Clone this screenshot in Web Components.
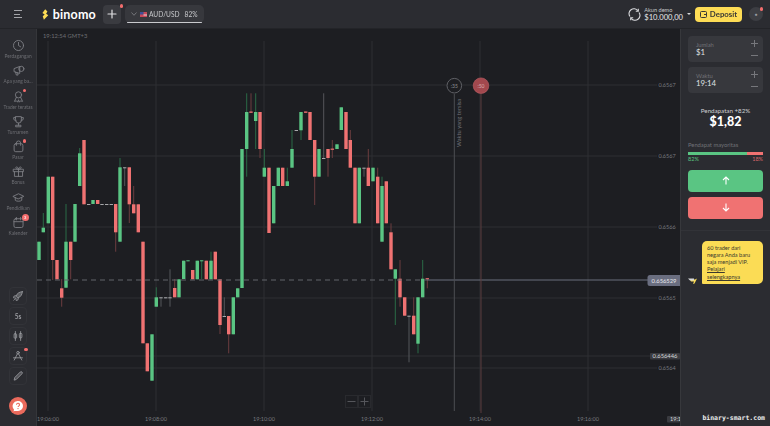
<!DOCTYPE html>
<html lang="id">
<head>
<meta charset="utf-8">
<title>Binomo</title>
<style>
  html, body { margin: 0; height: 100%; background: #1d1e22; }
  body { font-family: Lato, "Noto Sans", sans-serif; overflow: hidden; }
</style>
</head>
<body>
<bn-app>
  <bn-topbar slot="top"></bn-topbar>
  <bn-sidebar slot="side">
    <bn-side-item label="Perdagangan" icon="clock"></bn-side-item>
    <bn-side-item label="Apa yang ba..." icon="news"></bn-side-item>
    <bn-side-item label="Trader teratas" icon="medal" dot></bn-side-item>
    <bn-side-item label="Turnamen" icon="trophy"></bn-side-item>
    <bn-side-item label="Pasar" icon="bag" dot></bn-side-item>
    <bn-side-item label="Bonus" icon="gift"></bn-side-item>
    <bn-side-item label="Pendidikan" icon="cap"></bn-side-item>
    <bn-side-item label="Kalender" icon="calendar" badge="3"></bn-side-item>
  </bn-sidebar>
  <bn-chart slot="chart"></bn-chart>
  <bn-panel slot="panel">
    <bn-stepper label="Jumlah" value="$1"></bn-stepper>
    <bn-stepper label="Waktu" value="19:14"></bn-stepper>
  </bn-panel>
</bn-app>

<script>
/**
 * Icons used by the sidebar and tool buttons
 */
const ICONS = {
  clock: '<circle cx="8" cy="8" r="6.2"/><path d="M8 4.2V8l2.6 1.6"/>',
  news: '<path d="M3 5.5 9.5 3v8.6L3 9.6z"/><circle cx="11.5" cy="6" r="3.2"/><path d="M4.5 10l.8 3.6h2.2L7 11"/>',
  medal: '<circle cx="8" cy="6" r="3.8"/><path d="M5.4 9 3 14l2.6-.6L7 15l1-3 1 3 1.4-1.6 2.6.6-2.4-5"/>',
  trophy: '<path d="M4.5 2h7v4.5a3.5 3.5 0 0 1-7 0z"/><path d="M4.5 3.2H2c0 2.6 1 3.8 2.8 4M11.5 3.2H14c0 2.6-1 3.8-2.8 4M8 10v2.6M5 14.5h6v-1.9H5z"/>',
  bag: '<rect x="2.6" y="4.6" width="10.8" height="9.8" rx="2"/><path d="M5.4 6.6V3.8a2.6 2.6 0 0 1 5.2 0v2.8"/>',
  gift: '<path d="M2 5.2h12v3H2zM3 8.2V14h10V8.2M8 5.2V14M8 5.2C6.4 5.2 4.4 4.6 4.8 3 5.3 1.4 7.4 2.4 8 5.2zM8 5.2c1.6 0 3.6-.6 3.2-2.2C10.7 1.4 8.6 2.4 8 5.2z"/>',
  cap: '<path d="M1.5 6.5 8 3.4l6.5 3.1L8 9.6z"/><path d="M4 8v3.4c1.500 1.600 6.500 1.600 8 0V8"/>',
  calendar: '<rect x="2.4" y="3.4" width="11.2" height="10.8" rx="2"/><path d="M2.4 7h11.2M5.4 1.8v3M10.6 1.8v3"/>',
  rocket: '<path d="M13.8 2.2c-4 .2-6.8 2.2-8.6 6l2.6 2.6c3.8-1.8 5.8-4.600 6-8.600z" fill="currentColor" fill-opacity=".45"/><path d="M5.4 7.6 2.6 8.2 2 10.4l3 .4M8.4 10.6 7.800 13.400l-2.200.6-.4-3M3.400 12.600 2.400 13.600"/>',
  candles: '<path d="M4.5 2v12M11.5 2v12"/><rect x="2.8" y="5" width="3.4" height="6" rx="1.2"/><rect x="9.8" y="4.5" width="3.4" height="6" rx="1.2"/>',
  compass: '<circle cx="8" cy="3.6" r="1.7"/><path d="M7.2 5.2 3 13.4M8.8 5.2 13 13.4M2 10.4h12"/>',
  pencil: '<path d="M3 13l.7-3L11 2.7a1.5 1.5 0 0 1 2.3 2.3L6 12.300z" fill="currentColor" fill-opacity=".35"/>'
};

const icon = (name, size = 13) =>
  `<svg width="${size}" height="${size}" viewBox="0 0 16 16" fill="none" stroke="currentColor" stroke-width="1.1" stroke-linecap="round" stroke-linejoin="round">${ICONS[name]}</svg>`;

/**
 * Page frame
 */
class BnApp extends HTMLElement {
  constructor() {
    super();
    this.attachShadow({ mode: 'open' });
    this.shadowRoot.innerHTML = `
      <style>
        :host {
          display: grid;
          grid-template-columns: 37px 1fr 90px;
          grid-template-rows: 29px 1fr;
          width: 770px;
          height: 426px;
          overflow: hidden;
          filter: blur(.35px);
        }
      </style>
      <slot name="top"></slot>
      <slot name="side"></slot>
      <slot name="chart"></slot>
      <slot name="panel"></slot>
    `;
  }
}

/**
 * Top bar with logo, asset tab and account
 */
class BnTopbar extends HTMLElement {
  constructor() {
    super();
    this.attachShadow({ mode: 'open' });
    this.shadowRoot.innerHTML = `
      <style>
        :host {
          grid-column: 1 / 4;
          display: flex;
          align-items: center;
          background: #2b2c31;
          border-bottom: 1px solid #232428;
          box-sizing: border-box;
          color: #fff;
          padding-left: 14px;
        }
        .burger { width: 8px; height: 8px; display: flex; flex-direction: column; justify-content: space-between; }
        .burger i { display: block; height: 1px; background: #a4a5a9; }
        .burger i:nth-child(2) { width: 6px; }
        .logo { display: flex; align-items: center; gap: 4px; width: 54px; margin-left: 20px; font-size: 12.5px; font-weight: 700; letter-spacing: .2px; }
        .add {
          position: relative;
          width: 18px; height: 19px; margin-left: 7px;
          display: flex; align-items: center; justify-content: center;
          background: #3a3b40; border-radius: 4px;
        }
        .dot { position: absolute; width: 3.5px; height: 3.5px; border-radius: 50%; background: #f26d6d; }
        .add .dot { right: -2px; top: -.5px; }
        .tab {
          position: relative;
          display: flex; align-items: center;
          width: 79px; height: 18px; margin-left: 4px; box-sizing: border-box;
          padding-left: 6px;
          background: #37383d; border-radius: 5px;
          font-size: 6.6px; color: #c8c9cc;
        }
        .tab::after {
          content: ''; position: absolute; left: 2px; right: 2px; bottom: 0;
          height: 1px; background: #c9cace; border-radius: 1px;
        }
        .flag { width: 7px; height: 5px; margin: 0 2px 0 3px; }
        .pct { margin-left: 5px; }
        .spacer { flex: 1; }
        .acct { display: flex; flex-direction: column; margin-left: 3px; line-height: 1; }
        .acct small { font-size: 5.6px; color: #c8c9cc; margin-bottom: 1.5px; }
        .acct b { font-size: 7.6px; font-weight: 400; color: #e4e5e7; }
        .caret { width: 0; height: 0; margin: 0 4px 1px 4px; border: 2px solid transparent; border-top: 2.5px solid #d4d5d8; border-bottom: 0; }
        .deposit {
          display: flex; align-items: center; justify-content: center; gap: 3px;
          width: 47px; height: 15px;
          background: #fddc55; border-radius: 4px;
          color: #3a3a35; font-size: 7.8px; font-weight: 700;
        }
        .avatar {
          position: relative;
          width: 14px; height: 14px; margin: 0 7px;
          border-radius: 50%; background: #3d3e43;
          display: flex; align-items: center; justify-content: center;
          font-size: 4.5px; color: #9a9ba0;
        }
        .avatar .dot { right: 0; top: 0; }
      </style>
      <div class="burger"><i></i><i></i><i></i></div>
      <div class="logo">
        <svg width="7" height="11" viewBox="0 0 7 11"><path d="M3.4 0 .4 3.8l2.4 1.6L.8 7.4 2 11l4.600-4.800-2.300-1.500 1.400-2.300z" fill="#fddc55"/></svg>
        <span>binomo</span>
      </div>
      <div class="add">
        <svg width="10" height="10" viewBox="0 0 10 10"><path d="M5 1v8M1 5h8" stroke="#dfe0e2" stroke-width="1.2" stroke-linecap="round"/></svg>
        <span class="dot"></span>
      </div>
      <div class="tab">
        <svg width="6" height="4" viewBox="0 0 6 4"><path d="M.5.5 3 3.300 5.500.5" fill="none" stroke="#7b7c80" stroke-width=".9"/></svg>
        <svg class="flag" viewBox="0 0 7 5"><rect width="7" height="5" fill="#c9495a"/><rect width="3.5" height="2.5" fill="#3d4f96"/><rect x="3.5" y="2.5" width="3.5" height="1" fill="#dcdde2"/></svg>
        <span>AUD/USD</span><span class="pct">82%</span>
      </div>
      <div class="spacer"></div>
      <svg width="13" height="13" viewBox="0 0 13 13" fill="none" stroke="#d8d9dc" stroke-width="1.1"><path d="M2 8.500A4.800 4.800 0 0 1 9.800 2.700M11 4.500A4.800 4.800 0 0 1 3.200 10.300"/><path d="M10.300.8v2.500H7.800M2.700 12.200V9.700h2.500"/></svg>
      <div class="acct"><small>Akun demo</small><b>$10.000,00</b></div>
      <span class="caret"></span>
      <div class="deposit">
        <svg width="7" height="7" viewBox="0 0 7 7" fill="none" stroke="#3a3a35"><rect x=".5" y=".5" width="6" height="6" rx="1"/><path d="M4 3.500h2.500"/></svg>
        <span>Deposit</span>
      </div>
      <div class="avatar">●<span class="dot"></span></div>
    `;
  }
}

/**
 * Left column
 */
class BnSidebar extends HTMLElement {
  constructor() {
    super();
    this.attachShadow({ mode: 'open' });
    const tools = [
      ['rocket', ''], ['', '5s'], ['candles', ''], ['compass', '', true], ['pencil', '']
    ];
    this.shadowRoot.innerHTML = `
      <style>
        :host {
          display: flex;
          flex-direction: column;
          align-items: center;
          background: #2b2c31;
          border-right: 1px solid #35363a;
          box-sizing: border-box;
          padding-top: 9px;
          height: 397px;
        }
        .items { width: 100%; flex: 1; }
        .tools { display: flex; flex-direction: column; gap: 2px; }
        .tool {
          position: relative;
          width: 18px; height: 18px; box-sizing: border-box;
          border: 1px solid #323338; border-radius: 4px;
          display: flex; align-items: center; justify-content: center;
          color: #9a9ba0; font-size: 6.5px; font-weight: 700;
        }
        .dot { position: absolute; right: -1.5px; top: -.5px; width: 3.5px; height: 3.5px; border-radius: 50%; background: #f26d6d; }
        .help {
          width: 18px; height: 18px; margin: 12px 0 11px;
          border-radius: 50%; background: #ea6a5c;
          display: flex; align-items: center; justify-content: center;
        }
      </style>
      <div class="items"><slot></slot></div>
      <div class="tools">
        ${tools.map(([name, text, dot]) => `
          <div class="tool">${name ? icon(name, 12) : text}${dot ? '<span class="dot"></span>' : ''}</div>
        `).join('')}
      </div>
      <div class="help">
        <svg width="12" height="12" viewBox="0 0 12 12">
          <path d="M6 1a5 5 0 0 1 0 10H2.500l-.9.600.4-2.200A5 5 0 0 1 6 1z" fill="#fff"/>
          <path d="M4.500 4.800A1.500 1.500 0 1 1 6.700 6.100c-.5.300-.7.500-.7 1" fill="none" stroke="#ea6a5c" stroke-width="1.1"/>
          <circle cx="6" cy="8.600" r=".7" fill="#ea6a5c"/>
        </svg>
      </div>
    `;
  }
}

class BnSideItem extends HTMLElement {
  constructor() {
    super();
    this.attachShadow({ mode: 'open' });
  }

  connectedCallback() {
    const badge = this.getAttribute('badge');
    this.shadowRoot.innerHTML = `
      <style>
        :host {
          display: flex;
          flex-direction: column;
          align-items: center;
          height: 25.3px;
          color: #7e7f84;
        }
        .ico { position: relative; height: 15px; display: flex; align-items: center; justify-content: center; }
        .label { font-size: 4.8px; line-height: 6px; color: #6d6e73; white-space: nowrap; }
        .dot { position: absolute; right: -1.5px; top: 0; width: 3.5px; height: 3.5px; border-radius: 50%; background: #f26d6d; }
        .badge {
          position: absolute; right: -4px; top: -1px;
          width: 7px; height: 7px; border-radius: 50%;
          background: #f26d6d; color: #fff; font-size: 4.5px; line-height: 7px; text-align: center;
        }
      </style>
      <div class="ico">
        ${icon(this.getAttribute('icon'))}
        ${this.hasAttribute('dot') ? '<span class="dot"></span>' : ''}
        ${badge ? `<span class="badge">${badge}</span>` : ''}
      </div>
      <div class="label">${this.getAttribute('label')}</div>
    `;
  }
}

/**
 * Candles as [x, top, bottom, wickTop, wickBottom, colour], r / g / d (doji)
 */
const CANDLES = [
  [39,241.7,260,241.7,260,'g'],[43.3,227.7,232.3,213,232.3,'g'],[48.3,176.7,223.3,176.7,223.3,'g'],[52.7,176.7,260,176.7,280,'r'],
  [57,260,279.3,260,279.3,'r'],[61.7,288.3,297.7,279,306.7,'r'],[66,241.7,287.7,204,288,'g'],[70.7,241.7,260,241.7,279.3,'r'],
  [75,204,241.7,204,241.7,'g'],[79.7,153.3,186,148,186,'g'],[84,140,204.3,140,204.3,'r'],[88.7,204,205,204,205,'d'],
  [93,200,204,200,204,'g'],[97.7,200,204,200,204,'r'],[102,204,205,204,205,'d'],[106.7,204,205,204,205,'d'],[111.3,204,205,204,205,'d'],
  [115.7,204,232.3,204,251.7,'r'],[120,167.3,241.7,158,241.7,'g'],[124.7,167.3,168.3,167.3,186,'d'],[129.3,167.3,204.3,167.3,223,'r'],
  [133.7,204.3,213.3,186,213.3,'r'],[138.3,204.3,232.3,204.3,232.3,'r'],[143,241.7,343.3,241.7,343.3,'r'],[147.3,343.3,371.3,343.3,371.3,'r'],
  [152,334.3,380.7,334.3,380.7,'g'],[156.3,297.3,306.7,287.3,306.7,'g'],[161,297.3,298.3,297.3,306.7,'d'],[165.7,297.3,298.3,297.3,298.3,'d'],
  [170,297.3,298.3,269.3,306.7,'d'],[174.7,288,297.3,279,297.3,'r'],[179,279.3,297.3,279.3,297.3,'g'],[183.7,260.7,279,260.7,279,'g'],
  [188,260.3,261.3,260.3,261.3,'g'],[192.7,270,279.3,270,279.3,'r'],[197.3,260.7,279.3,260.7,279.3,'g'],[201.7,260.3,261.3,260.3,279,'g'],
  [206.3,260.7,279.3,260.7,279.3,'r'],[211,260.7,279.3,251.7,279.3,'g'],[215.3,251.7,279.3,251.7,279.3,'r'],[220,279.3,325,279.3,334,'r'],
  [224.3,316,317,297.3,316,'d'],[228.7,316,334.3,316,353.3,'r'],[233.3,297.3,334.3,297.3,334.3,'g'],[237.7,288.3,297.3,288.3,297.3,'g'],
  [242,149,288,149,288,'g'],[246.7,112,149,93.3,176.7,'g'],[251,111.5,112.8,93.3,112.8,'r'],[255.7,112,121,93.3,149,'g'],
  [260,112,149,112,158,'r'],[264.3,167.7,176.7,149,176.7,'g'],[269,167.7,233,167.7,233,'r'],[273.7,186,223.3,186,223.3,'g'],
  [278.3,167.7,186,167.7,186,'g'],[282.7,167.7,186,167.7,186,'r'],[287.3,181.3,186,167.7,186,'g'],[292,149,167.7,130,167.7,'g'],
  [296.3,130,131,130,131,'d'],[301,112,130.3,112,140,'g'],[305.7,111.5,112.8,111.5,112.8,'r'],[310,112,140,112,140,'r'],
  [314.7,140,176.7,140,205,'r'],[319,149,176.7,149,176.7,'g'],[323.7,158,159,93.3,159,'d'],[328,149,158,149,176.7,'r'],
  [332.3,148.6,149.8,140,158,'r'],[337,144.3,149,144.3,149,'g'],[341.3,107.3,130,107.3,130,'g'],[346,112,149,112,149,'r'],
  [350.3,140,167.7,130,167.7,'r'],[355,167.7,223.3,167.7,223.3,'r'],[359.3,167.7,223.3,167.7,223.3,'g'],[364,167.7,168.7,167.7,176.7,'d'],
  [368.3,167.7,186,149,186,'r'],[373,167.7,181.3,167.7,181.3,'g'],[377.7,176.7,223.3,167.7,223.3,'r'],[382,186,241.7,176.7,241.7,'g'],
  [386.3,181.3,223.3,181.3,223.3,'r'],[391,232.3,269.3,223.3,269.3,'r'],[395.3,269.3,278.7,269.3,325,'g'],[400,278.7,297.3,260,306.7,'r'],
  [404.7,297.3,315.7,297.3,315.7,'r'],[409,315.7,316.7,315.7,362.3,'d'],[413.7,315.7,334.3,297.3,334.3,'r'],[418,297.3,343.7,297.3,353.3,'g'],
  [422.7,278.7,297.3,260,297.3,'g'],[427.3,278.2,279.4,278.2,288.3,'r']
];

const BODY = { g: '#5ac583', r: '#f07272', d: '#a7a8ab' };
const WICK = { g: '#2b6b47', r: '#6c3d3f', d: '#55565b' };

/**
 * Price chart, a free canvas in page coordinates
 */
class BnChart extends HTMLElement {
  constructor() {
    super();
    this.attachShadow({ mode: 'open' });
    const hLines = [[85, '0.6567'], [156, '0.6567'], [227, '0.6566'], [298, '0.6565'], [368, '0.6564']];
    const vLines = [[48, '19:06:00'], [156, '19:08:00'], [264, '19:10:00'], [372, '19:12:00'], [480, '19:14:00'], [588, '19:16:00']];

    const grid = hLines.map(([y, text]) =>
      `<path d="M37 ${y}H657" class="grid"/><text x="667" y="${y + 2}" text-anchor="middle" class="tick">${text}</text>`
    ).join('') + vLines.map(([x, text]) =>
      `<path d="M${x} 41V411" class="grid"/><text x="${x}" y="421" text-anchor="middle" class="tick">${text}</text>`
    ).join('');

    const candles = CANDLES.map(([x, top, bottom, wickTop, wickBottom, colour]) => `
      <path d="M${x} ${wickTop}V${wickBottom}" stroke="${WICK[colour]}" stroke-width="1"/>
      <rect x="${x - 1.7}" y="${top}" width="3.4" height="${bottom - top}" fill="${BODY[colour]}"/>
    `).join('');

    this.shadowRoot.innerHTML = `
      <style>
        :host { display: block; position: relative; background: #1d1e22; width: 643px; height: 397px; overflow: hidden; }
        svg { display: block; font-family: Lato, "Noto Sans", sans-serif; }
        .grid { stroke: #2e2f33; stroke-width: 1; fill: none; }
        .tick { font-size: 5.5px; fill: #77797e; }
        .clock { position: absolute; left: 6px; top: 3px; font-size: 5.8px; color: #6d6e73; }
        .zoom { position: absolute; left: 308px; top: 366px; display: flex; }
        .zoom span {
          width: 13px; height: 13px; box-sizing: border-box;
          border: 1px solid #292a2e;
          display: flex; align-items: center; justify-content: center;
        }
      </style>
      <svg width="643" height="397" viewBox="37 29 643 397">
        ${grid}
        <path d="M37 356H650" class="grid"/>
        ${candles}
        <path d="M37 280H427" stroke="#63656b" stroke-width="1" stroke-dasharray="5 4" fill="none"/>
        <path d="M427 280H648" stroke="#6b6e7c" stroke-width="1" fill="none"/>

        <path d="M454.3 94V411" stroke="#4d4e53" stroke-width="1"/>
        <circle cx="454.3" cy="85.7" r="7.3" fill="#1d1e22" stroke="#5f6065" stroke-width="1"/>
        <text x="454.3" y="87.700" text-anchor="middle" font-size="5" fill="#8d8e92">:35</text>
        <text transform="translate(461 147) rotate(-90)" font-size="5.8" fill="#6f7075">Waktu yang tersisa</text>

        <path d="M481 94V413" stroke="#5a3a3d" stroke-width="1"/>
        <circle cx="481" cy="85.7" r="7.8" fill="#a2484e" stroke="#c06066" stroke-width=".6"/>
        <text x="481" y="87.700" text-anchor="middle" font-size="5" fill="#d9b0b2">:50</text>

        <path d="M650 275H680V286H650a2.5 2.5 0 0 1-2.5-2.5V277.5A2.5 2.5 0 0 1 650 275z" fill="#6a6e80"/>
        <text x="664" y="282.5" text-anchor="middle" font-size="5.8" fill="#e8e9ec">0.656529</text>
        <rect x="650" y="353" width="30" height="6.5" rx="1" fill="#3a3b40"/>
        <text x="665" y="358.2" text-anchor="middle" font-size="5.8" fill="#d5d6d9">0.656446</text>
        <rect x="667" y="416" width="13" height="6.5" rx="1" fill="#3a3b40"/>
        <text x="670" y="421.2" font-size="5.5" fill="#d5d6d9">19:1</text>
      </svg>
      <div class="clock">19:12:54 GMT+3</div>
      <div class="zoom">
        <span><svg width="9" height="9" viewBox="0 0 9 9"><path d="M.5 4.5h8" stroke="#55565b"/></svg></span>
        <span><svg width="9" height="9" viewBox="0 0 9 9"><path d="M.5 4.5h8M4.5.5v8" stroke="#55565b"/></svg></span>
      </div>
    `;
  }
}

/**
 * Amount / time field
 */
class BnStepper extends HTMLElement {
  constructor() {
    super();
    this.attachShadow({ mode: 'open' });
  }

  connectedCallback() {
    this.shadowRoot.innerHTML = `
      <style>
        :host {
          display: flex;
          align-items: center;
          justify-content: space-between;
          height: 26px;
          box-sizing: border-box;
          padding: 0 5px 0 8px;
          background: #37383d;
          border-radius: 4px;
        }
        .label { font-size: 5.8px; line-height: 7px; color: #717277; }
        .value { font-size: 7.8px; line-height: 9px; color: #dfe0e2; }
        .btns { display: flex; flex-direction: column; gap: 5px; }
        svg { display: block; }
      </style>
      <div>
        <div class="label">${this.getAttribute('label')}</div>
        <div class="value">${this.getAttribute('value')}</div>
      </div>
      <div class="btns">
        <svg width="7" height="7" viewBox="0 0 7 7"><path d="M0 3.5h7M3.5 0v7" stroke="#76777c"/></svg>
        <svg width="7" height="7" viewBox="0 0 7 7"><path d="M0 3.5h7" stroke="#76777c"/></svg>
      </div>
    `;
  }
}

/**
 * Right column with trade controls
 */
class BnPanel extends HTMLElement {
  constructor() {
    super();
    this.attachShadow({ mode: 'open' });
    this.shadowRoot.innerHTML = `
      <style>
        :host {
          display: flex;
          flex-direction: column;
          box-sizing: border-box;
          height: 397px;
          padding: 7px 7px 0 7px;
          background: #2b2c31;
          border-left: 1px solid #37383c;
          color: #e6e7e9;
        }
        .fields { display: flex; flex-direction: column; gap: 5px; }
        .income { text-align: center; margin-top: 14px; font-size: 6.2px; line-height: 8px; color: #d0d1d4; }
        .income b { display: block; font-size: 12.5px; line-height: 14px; color: #fff; font-weight: 900; }
        .major { margin-top: 12px; font-size: 5.8px; line-height: 7px; color: #717277; }
        .bar { display: flex; height: 2.5px; margin-top: 4px; background: #f07272; }
        .bar i { display: block; width: 78%; background: #5ac583; }
        .pcts { display: flex; justify-content: space-between; margin-top: 1px; font-size: 5.5px; line-height: 7px; }
        .up { color: #5ac583; }
        .down { color: #d9666a; }
        .trade {
          height: 22px; border-radius: 4px; margin-top: 5px;
          display: flex; align-items: center; justify-content: center;
        }
        .trade.g { background: #5ac583; margin-top: 7px; }
        .trade.r { background: #f07272; }
        hr { border: 0; border-top: 1px solid #323338; margin: 11px -7px 0 -7px; }
        .promo { display: flex; align-items: flex-end; gap: 5px; margin-top: 10px; }
        .bubble {
          flex: 1;
          padding: 3px 5px;
          height: 43px; box-sizing: border-box;
          background: #fbdc55;
          border-radius: 5px 5px 5px 1px;
          color: #3a382e;
          font-size: 5.6px; line-height: 7.3px;
        }
        .bubble u { display: block; }
        .brand {
          position: absolute; right: 5px; bottom: 4px;
          font-family: "DejaVu Sans Mono", monospace; font-size: 6.5px; font-weight: 700; color: #eceded;
        }
      </style>
      <div class="fields"><slot></slot></div>
      <div class="income">Pendapatan +82%<b>$1,82</b></div>
      <div class="major">Pendapat mayoritas</div>
      <div class="bar"><i></i></div>
      <div class="pcts"><span class="up">82%</span><span class="down">18%</span></div>
      <div class="trade g"><svg width="8" height="9" viewBox="0 0 8 9"><path d="M4 8.5V1M1 4l3-3 3 3" fill="none" stroke="#fff" stroke-width="1.1"/></svg></div>
      <div class="trade r"><svg width="8" height="9" viewBox="0 0 8 9"><path d="M4 .5V8M1 5l3 3 3-3" fill="none" stroke="#fff" stroke-width="1.1"/></svg></div>
      <hr>
      <div class="promo">
        <svg width="9" height="6" viewBox="0 0 9 6"><path d="M2 1.500h5L9 .5 6.500 5.500 5 6 6 3.500H3z" fill="#fbdc55"/><path d="M0 .5h6V2.500H2z" fill="#d8d9dc"/></svg>
        <div class="bubble">60 trader dari negara Anda baru saja menjadi VIP. <u>Pelajari</u><u>selengkapnya</u></div>
      </div>
      <div class="brand">binary-smart.com</div>
    `;
  }
}

customElements.define('bn-app', BnApp);
customElements.define('bn-topbar', BnTopbar);
customElements.define('bn-sidebar', BnSidebar);
customElements.define('bn-side-item', BnSideItem);
customElements.define('bn-chart', BnChart);
customElements.define('bn-stepper', BnStepper);
customElements.define('bn-panel', BnPanel);
</script>
</body>
</html>
